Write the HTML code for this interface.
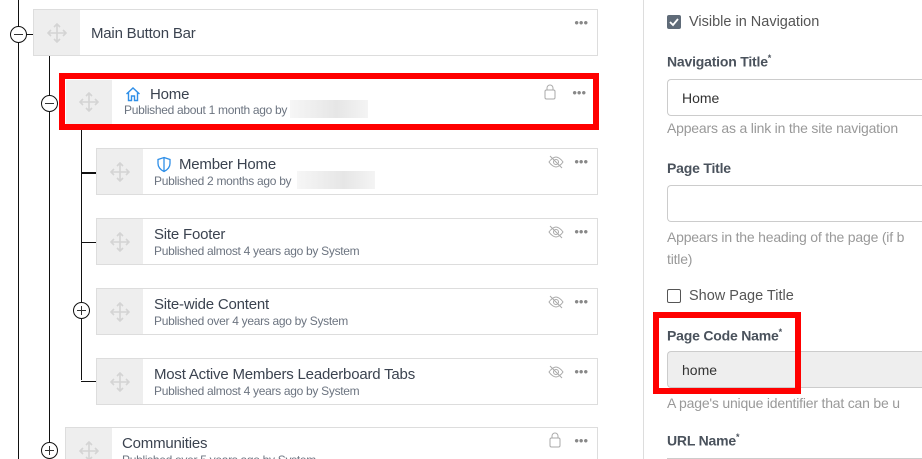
<!DOCTYPE html>
<html style="width:922px;height:459px;overflow:hidden"><head><meta charset="utf-8"><style>
*{box-sizing:border-box;margin:0;padding:0}
body{width:922px;height:459px;overflow:hidden;background:#fff;font-family:"Liberation Sans",sans-serif;position:relative;color:#3b4350}
.a{position:absolute}
.vl{position:absolute;width:1px;background:#111}
.hl{position:absolute;height:1px;background:#111}
.card{position:absolute;border:1px solid #ddd;background:#fff;overflow:hidden}
.h{position:absolute;left:0;top:0;bottom:0;width:46px;background:#eee}
.h svg{position:absolute;left:13px;top:13px}
.t{position:absolute;font-size:15px;color:#3b4350;letter-spacing:-0.2px}
.s{position:absolute;font-size:12px;color:#6c7480;letter-spacing:-0.3px}
.dots{position:absolute;top:5px;font-size:13px;color:#888}
.circ{position:absolute;width:17px;height:17px;border:1px solid #111;border-radius:50%;background:#fff}
.circ:before{content:"";position:absolute;left:3px;right:3px;top:7px;height:1px;background:#333}
.circ.p:after{content:"";position:absolute;top:3px;bottom:3px;left:7px;width:1px;background:#333}
.blur{position:absolute;height:18px;width:78px;background:linear-gradient(90deg,#f6f6f6,#e6e6e6 60%,#f4f4f4)}
.lbl{position:absolute;left:667px;font-size:14px;font-weight:bold;color:#4a525c;letter-spacing:-0.2px}
.lbl sup{font-size:9px}
.inp{position:absolute;left:667px;width:255px;height:37px;border:1px solid #ccc;border-right:none;border-radius:4px 0 0 4px;font-size:14px;color:#333;padding:10px 14px}
.help{position:absolute;left:667px;font-size:14px;color:#999;letter-spacing:-0.2px;white-space:nowrap}
</style></head><body>
<svg width="0" height="0" style="position:absolute"><defs>
<g id="mv"><path d="M10 1v18M1 10h18M7 4l3-3 3 3M7 16l3 3 3-3M4 7l-3 3 3 3M16 7l3 3-3 3" stroke="#d4d4d4" stroke-width="1.6" fill="none"/></g>
<g id="eye"><path d="M1 7c2-3 5-5 7-5s5 2 7 5c-2 3-5 5-7 5s-5-2-7-5z" stroke="#aaa" fill="none"/><circle cx="8" cy="7" r="2.5" stroke="#aaa" fill="none"/><path d="M2 1l12 12" stroke="#aaa"/></g>
<g id="lock"><rect x="1" y="6" width="10" height="9" rx="1.5" stroke="#aaa" fill="none"/><path d="M3 6V4a3 3 0 0 1 6 0v2" stroke="#aaa" fill="none"/></g>
</defs></svg>

<div class="vl" style="left:18px;top:0;height:459px"></div>
<div class="vl" style="left:49px;top:55px;height:404px"></div>
<div class="vl" style="left:81px;top:129px;height:251px"></div>
<div class="hl" style="left:81px;top:172px;width:15px;height:2px"></div>
<div class="hl" style="left:81px;top:242px;width:15px"></div>
<div class="hl" style="left:81px;top:381px;width:15px"></div>
<div class="hl" style="left:18px;top:34px;width:15px"></div>
<div class="hl" style="left:49px;top:451px;width:8px;height:2px"></div>

<div class="card" style="left:33px;top:9px;width:565px;height:47px"><div class="h"><svg width="20" height="20"><use href="#mv"/></svg></div><div class="t" style="left:57px;top:15px">Main Button Bar</div><div class="dots" style="right:9px">•••</div></div>
<div class="circ" style="left:10px;top:26px"></div>

<div class="a" style="left:59px;top:73px;width:540px;height:57px;border:6px solid #f00"></div>
<div class="card" style="left:66px;top:80px;width:526px;height:44px;border:none"><div class="h"><svg width="20" height="20" style="top:12px"><use href="#mv"/></svg></div>
<svg class="a" style="left:59px;top:6px" width="16" height="16"><path d="M1.5 8L8 2l6.5 6M3.5 6.5V14.5h3V10h3v4.5h3V6.5" stroke="#2f8fe8" stroke-width="1.4" fill="none"/></svg>
<div class="t" style="left:84px;top:6px">Home</div><div class="s" style="left:58px;top:23px">Published about 1 month ago by</div><div class="blur" style="left:224px;top:20px"></div>
<svg class="a" style="left:478px;top:4px" width="12" height="16"><use href="#lock"/></svg><div class="dots" style="right:6px">•••</div></div>
<div class="circ" style="left:41px;top:95px"></div>

<div class="card" style="left:96px;top:148px;width:502px;height:47px"><div class="h"><svg width="20" height="20"><use href="#mv"/></svg></div>
<svg class="a" style="left:59px;top:7px" width="16" height="17"><path d="M8 1.5l6 2v4c0 4-3 6.5-6 8-3-1.5-6-4-6-8v-4zM8 1.5v14" stroke="#2f8fe8" stroke-width="1.3" fill="none"/></svg>
<div class="t" style="left:82px;top:7px">Member Home</div><div class="s" style="left:57px;top:25px">Published 2 months ago by</div><div class="blur" style="left:200px;top:22px"></div>
<svg class="a" style="left:451px;top:6px" width="16" height="14"><use href="#eye"/></svg><div class="dots" style="right:9px">•••</div></div>

<div class="card" style="left:96px;top:218px;width:502px;height:47px"><div class="h"><svg width="20" height="20"><use href="#mv"/></svg></div>
<div class="t" style="left:57px;top:7px">Site Footer</div><div class="s" style="left:57px;top:25px">Published almost 4 years ago by System</div>
<svg class="a" style="left:451px;top:6px" width="16" height="14"><use href="#eye"/></svg><div class="dots" style="right:9px">•••</div></div>

<div class="card" style="left:96px;top:288px;width:502px;height:47px"><div class="h"><svg width="20" height="20"><use href="#mv"/></svg></div>
<div class="t" style="left:57px;top:7px">Site-wide Content</div><div class="s" style="left:57px;top:25px">Published over 4 years ago by System</div>
<svg class="a" style="left:451px;top:6px" width="16" height="14"><use href="#eye"/></svg><div class="dots" style="right:9px">•••</div></div>
<div class="circ p" style="left:73px;top:302px"></div>

<div class="card" style="left:96px;top:358px;width:502px;height:47px"><div class="h"><svg width="20" height="20"><use href="#mv"/></svg></div>
<div class="t" style="left:57px;top:7px">Most Active Members Leaderboard Tabs</div><div class="s" style="left:57px;top:25px">Published almost 4 years ago by System</div>
<svg class="a" style="left:451px;top:6px" width="16" height="14"><use href="#eye"/></svg><div class="dots" style="right:9px">•••</div></div>

<div class="card" style="left:65px;top:427px;width:533px;height:32px;border-bottom:none"><div class="h"><svg width="20" height="20"><use href="#mv"/></svg></div>
<div class="t" style="left:56px;top:7px">Communities</div><div class="s" style="left:56px;top:25px">Published over 5 years ago by System</div>
<svg class="a" style="left:483px;top:4px" width="12" height="16"><use href="#lock"/></svg><div class="dots" style="right:9px">•••</div></div>
<div class="circ p" style="left:41px;top:442px"></div>

<div class="vl" style="left:643px;top:0;height:459px;background:#ddd"></div>
<div class="a" style="left:667px;top:15px;width:14px;height:14px;background:#5f6b78;border-radius:2px"><svg width="14" height="14"><path d="M3 7l3 3 5-6" stroke="#fff" stroke-width="1.8" fill="none"/></svg></div>
<div class="a" style="left:689px;top:14px;font-size:14.5px;color:#555">Visible in Navigation</div>
<div class="lbl" style="top:53px">Navigation Title<sup>*</sup></div>
<div class="inp" style="top:79px">Home</div>
<div class="help" style="top:120px">Appears as a link in the site navigation</div>
<div class="lbl" style="top:160px">Page Title</div>
<div class="inp" style="top:185px"></div>
<div class="help" style="top:226px;line-height:22px;white-space:normal;width:255px;overflow:hidden;height:44px">Appears in the heading of the page (if b<br>title)</div>
<div class="a" style="left:667px;top:289px;width:14px;height:14px;border:1px solid #555;border-radius:2px"></div>
<div class="a" style="left:689px;top:288px;font-size:14.5px;color:#555">Show Page Title</div>
<div class="lbl" style="top:327px">Page Code Name<sup>*</sup></div>
<div class="inp" style="top:351px;background:#eee">home</div>
<div class="a" style="left:653px;top:312px;width:148px;height:82px;border:6px solid #f00"></div>
<div class="help" style="top:395px">A page's unique identifier that can be u</div>
<div class="lbl" style="top:432px">URL Name<sup>*</sup></div>
<div class="a" style="left:667px;top:458px;width:255px;height:1px;background:#ccc"></div>
</body></html>
